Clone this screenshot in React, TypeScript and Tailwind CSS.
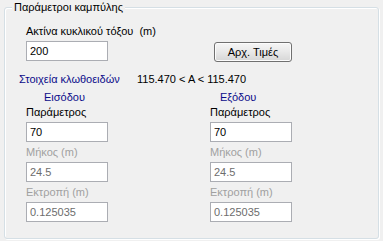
import React from "react";

const font = { fontFamily: '"Liberation Sans", Arial, sans-serif' };

function Field({ value, disabled }: { value: string; disabled?: boolean }) {
  return (
    <div
      className={`h-[20px] w-[82px] border border-[#abadb3] bg-white pl-[3px] flex items-center text-[11px] leading-[13px] ${
        disabled ? "text-[#6d6d6d]" : "text-black"
      }`}
    >
      {value}
    </div>
  );
}

function Label({ children, disabled }: { children: React.ReactNode; disabled?: boolean }) {
  return (
    <div className={`text-[11px] leading-[13px] whitespace-nowrap ${disabled ? "text-[#a0a0a0]" : "text-black"}`}>
      {children}
    </div>
  );
}

function Column({ title, titleOffset }: { title: string; titleOffset: string }) {
  return (
    <div className="flex flex-col w-[82px]">
      <div className={`text-[11px] leading-[13px] text-[#0c0c8a] whitespace-nowrap ${titleOffset}`}>{title}</div>
      <div className="mt-[2px]">
        <Label>Παράμετρος</Label>
      </div>
      <div className="mt-[3px]">
        <Field value="70" />
      </div>
      <div className="mt-[4px]">
        <Label disabled>Μήκος (m)</Label>
      </div>
      <div className="mt-[3px]">
        <Field value="24.5" disabled />
      </div>
      <div className="mt-[4px]">
        <Label disabled>Εκτροπή (m)</Label>
      </div>
      <div className="mt-[3px]">
        <Field value="0.125035" disabled />
      </div>
    </div>
  );
}

export default function App() {
  return (
    <div className="w-[383px] h-[241px] bg-[#f0f0f0] pt-[7px] pl-[4px]" style={font}>
      <div className="relative w-[375px] h-[232px] rounded-[3px] border border-[#d5dfe5] shadow-[1px_1px_0_0_#ffffff,inset_1px_1px_0_0_#ffffff]">
        <div className="absolute left-[7px] top-[-7px] px-[2px] bg-[#f0f0f0] text-[11px] leading-[13px] text-black whitespace-nowrap">
          Παράμετροι καμπύλης
        </div>
        <div className="pt-[17px] pl-[21px] flex flex-col">
          <div className="flex items-start">
            <div className="flex flex-col w-[188px]">
              <Label>Ακτίνα κυκλικού τόξου&nbsp; (m)</Label>
              <div className="mt-[3px]">
                <Field value="200" />
              </div>
            </div>
            <div className="mt-[17px] w-[78px] h-[20px] rounded-[3px] border border-[#707070] bg-gradient-to-b from-[#f6f6f6] via-[#e8e8e8] to-[#d6d6d6] flex items-center justify-center text-[11px] leading-[13px] text-black shadow-[inset_0_0_0_1px_#fcfcfc]">
              Αρχ. Τιμές
            </div>
          </div>
          <div className="mt-[11px] -ml-[7px] flex text-[11px] leading-[13px] whitespace-nowrap">
            <div className="w-[118px] text-[#0c0c8a]">Στοιχεία κλωθοειδών</div>
            <div className="text-black">115.470 &lt; A &lt; 115.470</div>
          </div>
          <div className="mt-[5px] flex gap-[102px]">
            <Column title="Εισόδου" titleOffset="ml-[18px]" />
            <Column title="Εξόδου" titleOffset="ml-[10px]" />
          </div>
        </div>
      </div>
    </div>
  );
}
